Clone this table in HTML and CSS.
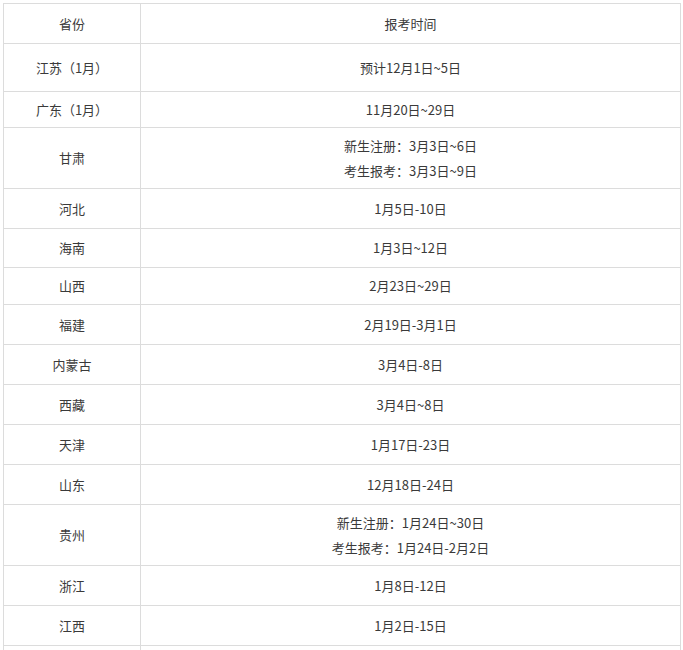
FILE: index.html
```html
<!DOCTYPE html>
<html lang="zh-CN">
<head>
<meta charset="utf-8">
<title>报考时间</title>
<link rel="stylesheet" href="styles.css">
</head>
<body>
<div class="wrap">
<table class="schedule">
  <colgroup><col class="c1"><col class="c2"></colgroup>
  <tr class="h40"><td>省份</td><td>报考时间</td></tr>
  <tr class="h48"><td>江苏（1月）</td><td>预计12月1日~5日</td></tr>
  <tr class="h36"><td>广东（1月）</td><td>11月20日~29日</td></tr>
  <tr class="h61"><td>甘肃</td><td><div class="ln">新生注册：3月3日~6日</div><div class="ln">考生报考：3月3日~9日</div></td></tr>
  <tr class="h40"><td>河北</td><td>1月5日-10日</td></tr>
  <tr class="h39"><td>海南</td><td>1月3日~12日</td></tr>
  <tr class="h37"><td>山西</td><td>2月23日~29日</td></tr>
  <tr class="h40"><td>福建</td><td>2月19日-3月1日</td></tr>
  <tr class="h40"><td>内蒙古</td><td>3月4日-8日</td></tr>
  <tr class="h40"><td>西藏</td><td>3月4日~8日</td></tr>
  <tr class="h40"><td>天津</td><td>1月17日-23日</td></tr>
  <tr class="h40"><td>山东</td><td>12月18日-24日</td></tr>
  <tr class="h61"><td>贵州</td><td><div class="ln">新生注册：1月24日~30日</div><div class="ln">考生报考：1月24日-2月2日</div></td></tr>
  <tr class="h40"><td>浙江</td><td>1月8日-12日</td></tr>
  <tr class="h40"><td>江西</td><td>1月2日-15日</td></tr>
  <tr class="h40"><td></td><td></td></tr>
</table>
</div>
</body>
</html>
```
FILE: styles.css
```css
html, body {
  margin: 0;
  padding: 0;
  background: #ffffff;
}
.wrap {
  padding: 3px 0 0 3px;
}
.schedule {
  border-collapse: collapse;
  width: 677px;
  table-layout: fixed;
  font-family: "Noto Sans CJK SC", "Microsoft YaHei", sans-serif;
  font-size: 13px;
  color: #3a3a3a;
}
.c1 { width: 137px; }
.c2 { width: 540px; }
.schedule td {
  border: 1px solid #dcdcdc;
  text-align: center;
  vertical-align: middle;
  padding: 0;
  line-height: 20px;
}
.ln { line-height: 25px; }
.h36 td { height: 35px; }
.h37 td { height: 36px; }
.h39 td { height: 38px; }
.h40 td { height: 39px; }
.h48 td { height: 47px; }
.h61 td { height: 60px; }
```
